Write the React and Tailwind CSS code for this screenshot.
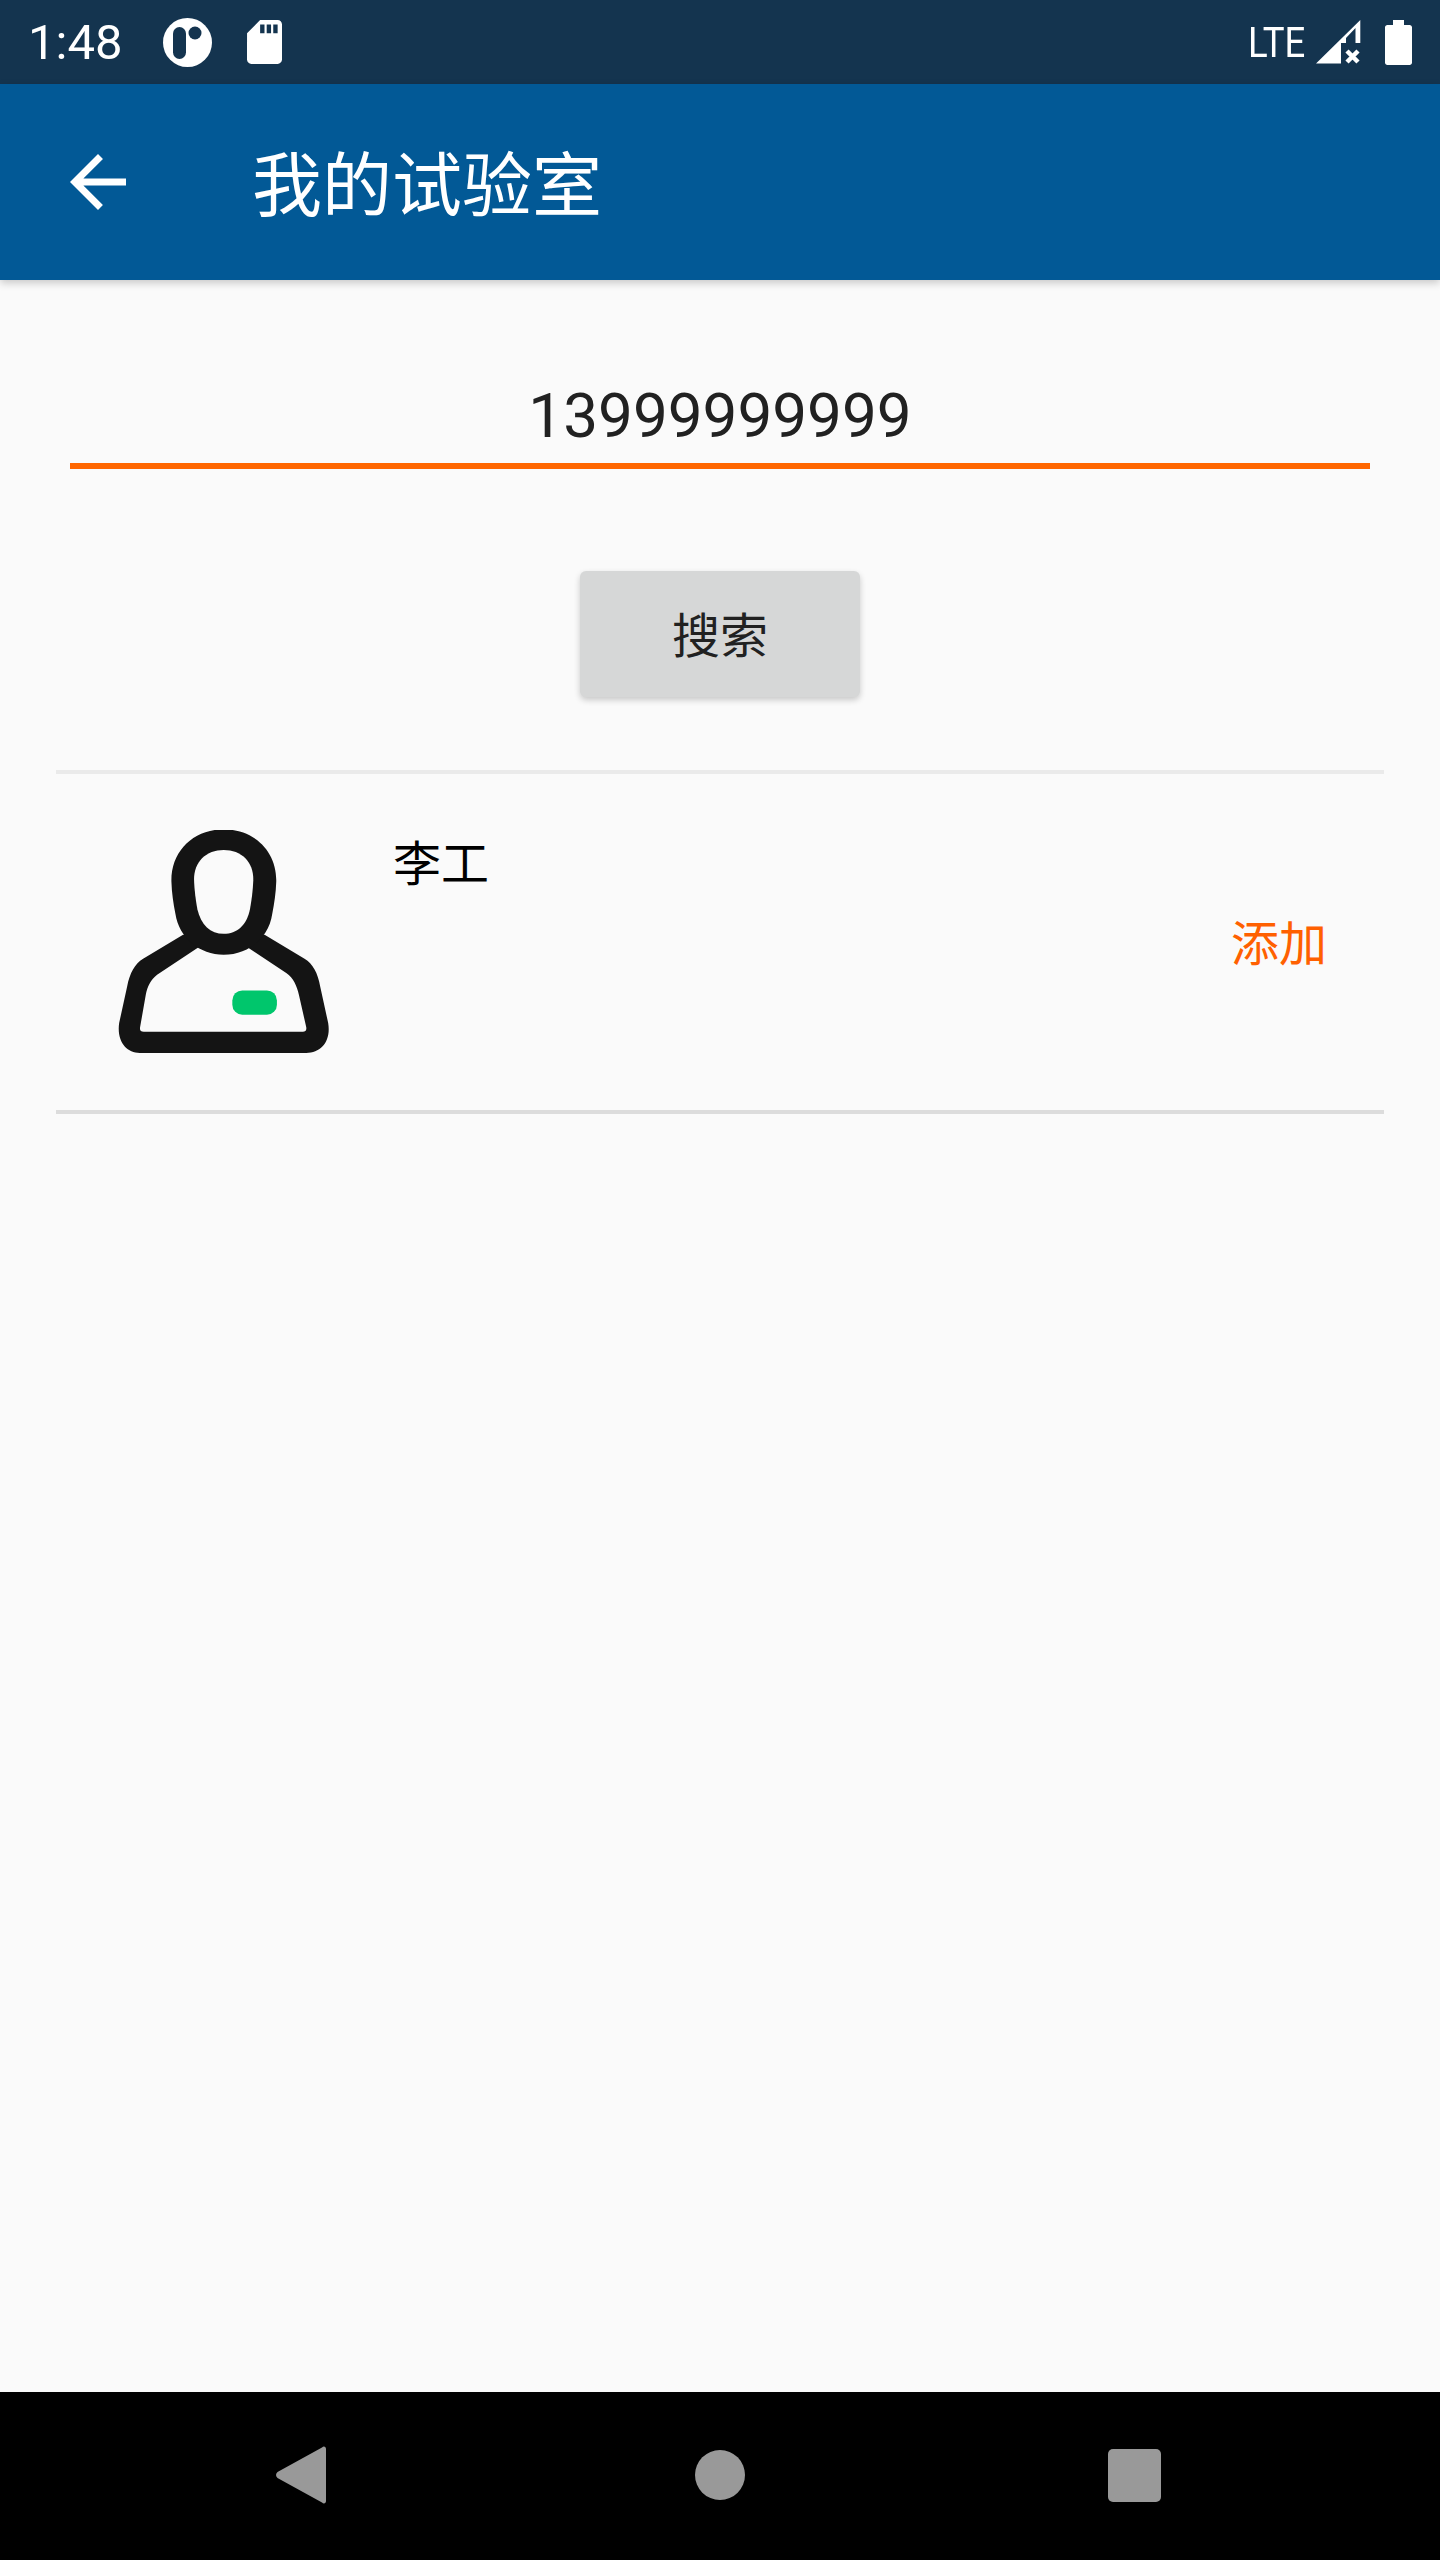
import React from "react";

const cjk = "font-['Noto_Sans_CJK_SC','Roboto',sans-serif]";

const StatusBar = () => (
  <div className="flex h-[84px] shrink-0 items-center bg-[#14344f] text-white">
    <span className="ml-[28px] w-[101px] font-['Roboto',sans-serif] text-[49px] leading-none">1:48</span>
    <svg className="ml-[34px] h-[49px] w-[49px]" viewBox="0 0 49 49">
      <circle cx="24.5" cy="24.5" r="24.5" fill="#fff" />
      <rect x="10" y="9" width="13" height="32" rx="6.5" fill="#14344f" />
      <circle cx="32" cy="15" r="6.5" fill="#14344f" />
    </svg>
    <svg className="ml-[35px] h-[44px] w-[35px]" viewBox="4 2 16 20" preserveAspectRatio="none" fill="#fff">
      <path d="M18 2h-8L4.02 8 4 20c0 1.1.9 2 2 2h12c1.1 0 2-.9 2-2V4c0-1.1-.9-2-2-2zm-6 6h-2V4h2v4zm3 0h-2V4h2v4zm3 0h-2V4h2v4z" />
    </svg>
    <div className="ml-auto flex items-center">
      <span className="w-[61px] origin-left scale-x-[0.85] font-['Roboto',sans-serif] text-[43px] leading-none whitespace-nowrap">LTE</span>
      <svg className="ml-[7px] h-[44px] w-[45px]" viewBox="0 0 45 44" fill="#fff">
        <path d="M44.3 0V23H39.5V8L30 18V23H25V43.5H0Z" />
        <path d="M31 31L42 42M42 31L31 42" stroke="#fff" strokeWidth="4.5" />
      </svg>
      <svg className="ml-[24px] mr-[28px] h-[45px] w-[27px]" viewBox="0 0 27 45" fill="#fff">
        <path d="M8 0H19V5H24.5C26 5 27 6 27 7.5V42.5C27 44 26 45 24.5 45H2.5C1 45 0 44 0 42.5V7.5C0 6 1 5 2.5 5H8Z" />
      </svg>
    </div>
  </div>
);

const AppBar = () => (
  <header className="z-10 flex h-[196px] shrink-0 items-center bg-[#025996] shadow-[0_3px_8px_rgba(0,0,0,0.2)]">
    <svg className="ml-[56px] h-[84px] w-[84px]" viewBox="0 0 24 24" fill="#fff">
      <path d="M20 11H7.83l5.59-5.59L12 4l-8 8 8 8 1.41-1.41L7.83 13H20v-2z" />
    </svg>
    <h1 className={`ml-[112px] pb-[3px] text-[70px] font-normal leading-none text-white ${cjk}`}>我的试验室</h1>
  </header>
);

// person badge: dark silhouettes with the light insides painted on top
const Avatar = () => (
  <svg className="h-[223px] w-[211px] blur-[0.5px]" viewBox="235 210 633 670">
    <path
      fill="#141414"
      d="M430 525L310 597C285 612 270 640 262 680L238 790C230 845 260 880 300 880H800C845 880 875 845 866 790L842 680C835 640 820 612 795 597L675 525Z"
    />
    <path
      fill="#fafafa"
      d="M480 560H620L740 640C762 655 772 680 778 705L800 802C802 812 797 816 790 816H312C303 816 299 812 301 802L318 705C323 680 333 660 352 645Z"
    />
    <path
      fill="#141414"
      d="M552 208C645 208 712 275 710 365C709 400 704 430 698 462C688 535 625 585 552 585C480 585 418 535 407 462C401 430 396 400 395 365C393 275 460 208 552 208Z"
    />
    <path
      fill="#fafafa"
      d="M552 270C605 270 642 305 641 360C640 390 636 420 631 448C622 495 592 522 552 522C512 522 484 495 473 448C468 420 464 390 463 360C462 305 500 270 552 270Z"
    />
    <rect x="578" y="692" width="134" height="73" rx="30" fill="#00c66c" />
  </svg>
);

const ResultRow = () => (
  <div className="mx-[56px] flex h-[340px] items-start border-b-4 border-[#dcdcdc] pl-[62px] pr-[57px] pt-[56px]">
    <Avatar />
    <span className={`ml-[64px] mt-[-5px] text-[48px] leading-[70px] text-black ${cjk}`}>李工</span>
    <span className={`ml-auto mt-[75px] text-[48px] leading-[70px] text-[#ff6000] ${cjk}`}>添加</span>
  </div>
);

const NavBar = () => (
  <div className="flex h-[168px] shrink-0 items-center bg-black pb-[2px]">
    <svg className="ml-[276px] h-[58px] w-[50px]" viewBox="0 0 50 58" fill="#999">
      <path d="M46 1.5C48 -0.5 50 1 50 3V55C50 57 48 58.5 46 56.5L1.5 32C-0.5 30 -0.5 28 1.5 26Z" />
    </svg>
    <div className="ml-[369px] h-[50px] w-[50px] rounded-full bg-[#999]" />
    <div className="ml-[363px] h-[53px] w-[53px] rounded-[5px] bg-[#999]" />
  </div>
);

export default function App() {
  return (
    <div className="flex h-[2560px] w-[1440px] flex-col bg-[#fafafa]">
      <StatusBar />
      <AppBar />
      <main className="flex-1">
        <div className="mx-[70px] mt-[96px] h-[93px] border-b-[6px] border-[#ff6600] text-center font-['Roboto',sans-serif] text-[62px] leading-[80px] text-[#212121]">
          13999999999
        </div>
        <div className="mt-[102px] flex justify-center">
          <button className={`h-[126px] w-[280px] rounded-[6px] bg-[#d6d7d7] pb-[5px] text-[48px] text-[#212121] shadow-[0_3px_6px_rgba(0,0,0,0.2)] ${cjk}`}>
            搜索
          </button>
        </div>
        <div className="mx-[56px] mt-[73px] h-[4px] bg-[#eaeaea]" />
        <ResultRow />
      </main>
      <NavBar />
    </div>
  );
}
